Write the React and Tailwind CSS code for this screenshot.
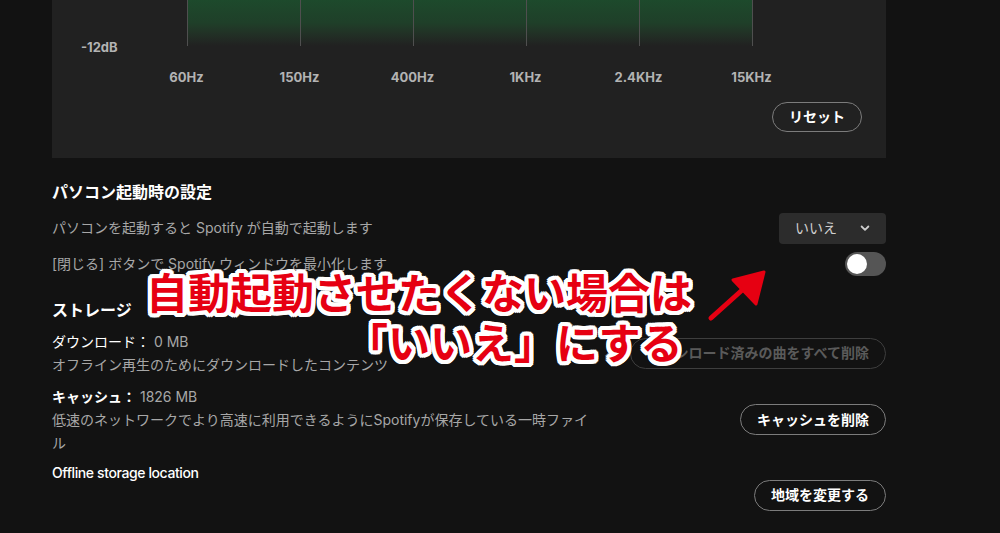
import React from 'react';

const freqs = ['60Hz', '150Hz', '400Hz', '1KHz', '2.4KHz', '15KHz'];

function PillButton({ children, disabled }) {
    return (
        <button
            disabled={disabled}
            className={`shrink-0 rounded-full border px-4 h-[31px] text-sm font-bold whitespace-nowrap ${
                disabled ? 'border-[#3e3e3e] text-[#5a5a5a]' : 'border-[#7c7c7c] text-white'
            }`}
        >
            {children}
        </button>
    );
}

export default function App() {
    return (
        <div
            className="relative w-[1000px] h-[533px] overflow-hidden bg-[#121212] text-white"
            style={{ fontFamily: '"Inter", "Noto Sans CJK JP", sans-serif' }}
        >
            <div className="ml-[52px] w-[834px]">
                {/* イコライザー */}
                <div className="h-[158px] bg-[#212121] relative">
                    <div className="flex">
                        <div className="w-[135px] h-[46px] flex items-end">
                            <span className="ml-[29px] mb-[-8px] text-[13px] font-bold text-[#b3b3b3] leading-none">-12dB</span>
                        </div>
                        <div className="w-[566px] h-[46px] grid grid-cols-5 border-l border-[#4f4f4f] bg-gradient-to-b from-[#1d4a2c] via-[#1f3f29] to-[#212121]">
                            {[0, 1, 2, 3, 4].map(i => (
                                <div key={i} className="border-r border-[#4f4f4f]" />
                            ))}
                        </div>
                    </div>
                    <div className="flex ml-[78px] mt-[22px]">
                        {freqs.map(f => (
                            <div key={f} className="w-[113px] text-center text-[13px] font-bold text-[#b3b3b3] leading-[18px]">
                                {f}
                            </div>
                        ))}
                    </div>
                    <div className="flex justify-end pr-6 mt-[16px]">
                        <button className="rounded-full border border-[#7c7c7c] h-[30px] px-4 text-sm font-bold text-white">
                            リセット
                        </button>
                    </div>
                </div>

                {/* パソコン起動時の設定 */}
                <h2 className="mt-[22px] text-base font-bold leading-6">パソコン起動時の設定</h2>
                <div className="mt-2 flex items-center justify-between h-[32px]">
                    <span className="text-sm text-[#a7a7a7]">パソコンを起動すると Spotify が自動で起動します</span>
                    <div className="w-[107px] h-[31px] rounded bg-[#2c2c2c] flex items-center justify-between pl-4 pr-[15px] text-sm text-[#d0d0d0]">
                        <span>いいえ</span>
                        <svg width="12" height="12" viewBox="0 0 16 16" fill="none" stroke="#cfcfcf" strokeWidth="2.4" strokeLinecap="round" strokeLinejoin="round">
                            <path d="M3.5 6l4.5 4.5L12.5 6" />
                        </svg>
                    </div>
                </div>
                <div className="mt-2 flex items-center justify-between h-6">
                    <span className="text-sm text-[#a7a7a7]">[閉じる] ボタンで Spotify ウィンドウを最小化します</span>
                    <div className="w-[41px] h-6 rounded-full bg-[#555555] p-[2px] flex items-center">
                        <div className="w-5 h-5 rounded-full bg-white" />
                    </div>
                </div>

                {/* ストレージ */}
                <h2 className="mt-[22px] text-base font-bold leading-6">ストレージ</h2>
                <div className="mt-[8px] flex items-center justify-between">
                    <div className="text-sm leading-[23px]">
                        <div><span className="text-white">ダウンロード：</span> <span className="text-[#a7a7a7]">0 MB</span></div>
                        <div className="text-[#a7a7a7]">オフライン再生のためにダウンロードしたコンテンツ</div>
                    </div>
                    <PillButton disabled>ダウンロード済みの曲をすべて削除</PillButton>
                </div>
                <div className="mt-[9px] flex items-center justify-between">
                    <div className="text-sm leading-[23px] w-[540px]">
                        <div><span className="text-white font-bold">キャッシュ：</span> <span className="text-[#a7a7a7]">1826 MB</span></div>
                        <div className="text-[#a7a7a7]">低速のネットワークでより高速に利用できるようにSpotifyが保存している一時ファイル</div>
                    </div>
                    <PillButton>キャッシュを削除</PillButton>
                </div>
                <div className="mt-[8px] flex items-center justify-between">
                    <div className="text-sm leading-[22px]">
                        <div className="text-white font-medium tracking-[-0.4px]">Offline storage location</div>
                        <div className="h-[44px]" />
                    </div>
                    <PillButton>地域を変更する</PillButton>
                </div>
            </div>

            {/* 注釈 */}
            <div
                className="absolute left-[146px] top-[266px] text-[42px] font-bold leading-[50px] text-[#e60012] whitespace-nowrap [text-shadow:4px_0_#fff,-4px_0_#fff,0_4px_#fff,0_-4px_#fff,3px_3px_#fff,-3px_-3px_#fff,3px_-3px_#fff,-3px_3px_#fff,2px_4px_#fff,-2px_4px_#fff,2px_-4px_#fff,-2px_-4px_#fff,4px_2px_#fff,-4px_2px_#fff,4px_-2px_#fff,-4px_-2px_#fff]"
                style={{ fontFamily: '"Noto Sans CJK JP", sans-serif' }}
            >
                <div>自動起動させたくない場合は</div>
                <div className="pl-[200px]">「いいえ」にする</div>
            </div>
            <svg className="absolute left-[700px] top-[262px]" width="75" height="65" viewBox="0 0 75 65">
                <path d="M11 56 L50 21" stroke="#e60012" strokeWidth="5" strokeLinecap="round" />
                <path d="M64 10 L33 18 L56 42 Z" fill="#e60012" stroke="#e60012" strokeWidth="3" strokeLinejoin="round" />
            </svg>
        </div>
    );
}
